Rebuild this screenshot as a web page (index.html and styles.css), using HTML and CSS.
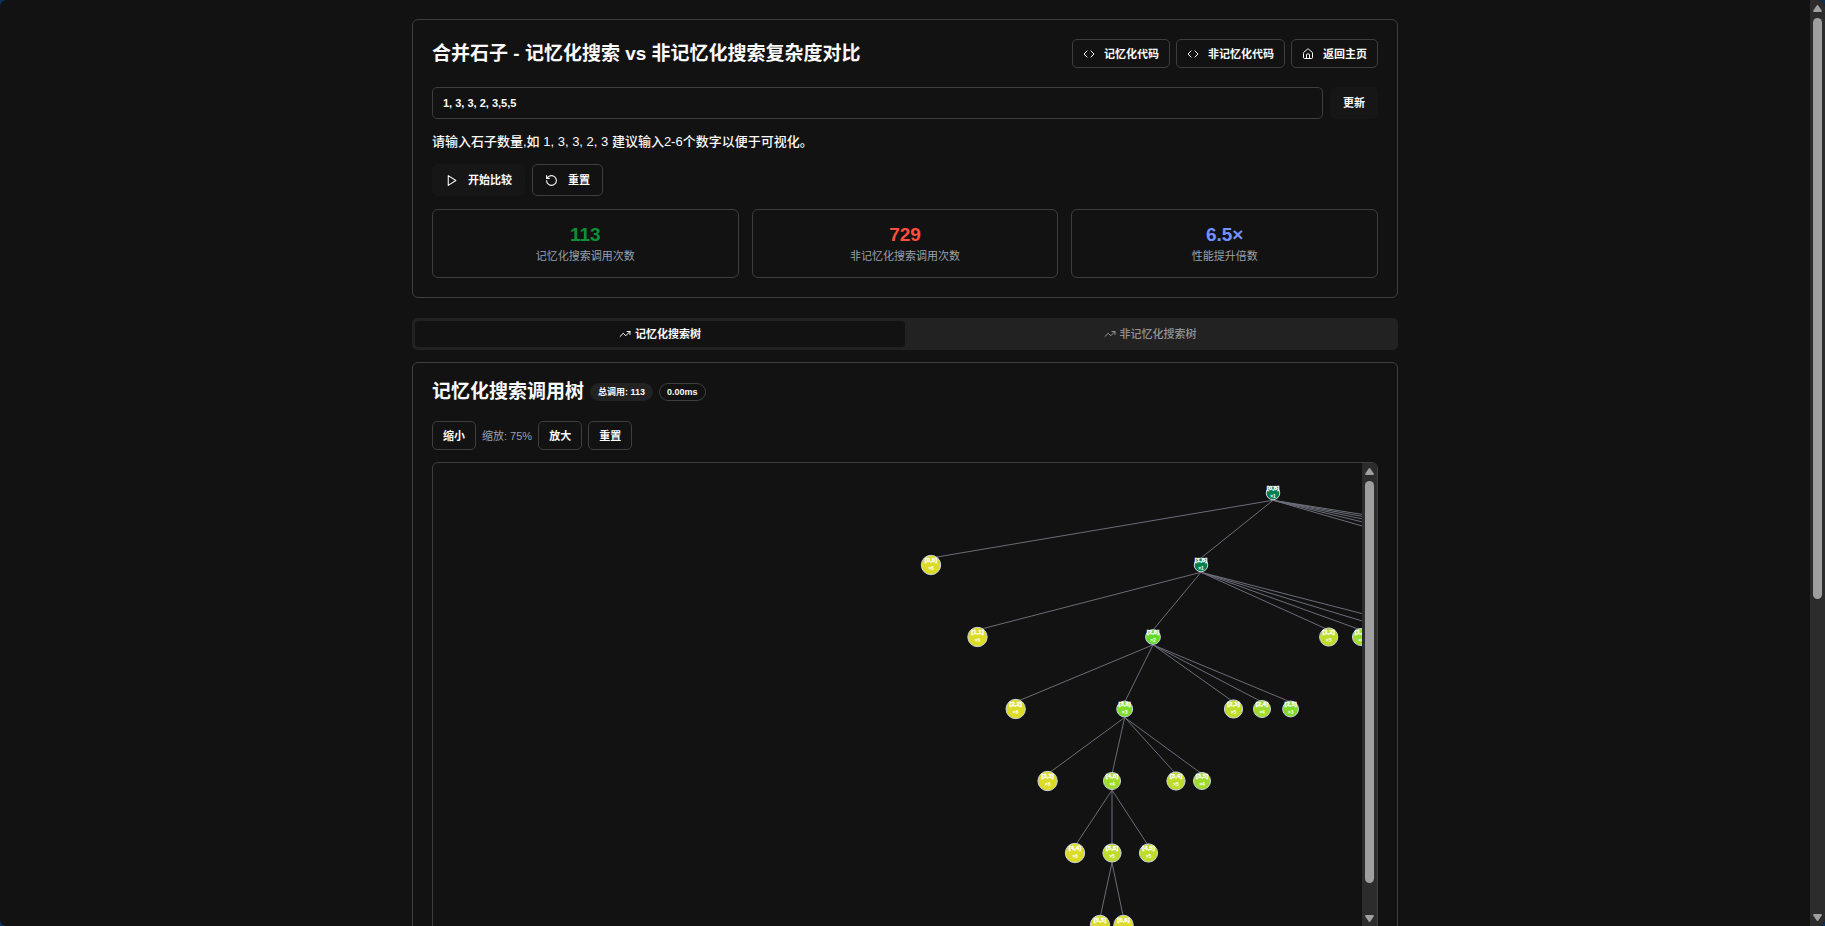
FILE: index.html
```html
<!DOCTYPE html>
<html lang="zh-CN">
<head>
<meta charset="utf-8">
<title>合并石子 - 复杂度对比</title>
<link rel="stylesheet" href="styles.css">
</head>
<body>
<svg class="sprite" aria-hidden="true">
  <symbol id="i-code" viewBox="0 0 24 24"><path d="m16 18 6-6-6-6M8 6l-6 6 6 6"/></symbol>
  <symbol id="i-home" viewBox="0 0 24 24"><path d="M15 21v-8a1 1 0 0 0-1-1h-4a1 1 0 0 0-1 1v8"/><path d="M3 10a2 2 0 0 1 .709-1.528l7-5.999a2 2 0 0 1 2.582 0l7 5.999A2 2 0 0 1 21 10v9a2 2 0 0 1-2 2H5a2 2 0 0 1-2-2z"/></symbol>
  <symbol id="i-play" viewBox="0 0 24 24"><path d="m6 3 14 9-14 9z"/></symbol>
  <symbol id="i-reset" viewBox="0 0 24 24"><path d="M3 12a9 9 0 1 0 9-9 9.75 9.75 0 0 0-6.74 2.74L3 8"/><path d="M3 3v5h5"/></symbol>
  <symbol id="i-trend" viewBox="0 0 24 24"><path d="m22 7-8.5 8.5-5-5L2 17"/><path d="M16 7h6v6"/></symbol>
  <symbol id="i-up" viewBox="0 0 9 7"><path d="M4.5 0Q5 0 5.3.6L8.7 5.4Q9.3 7 8 7H1Q-.3 7 .3 5.4L3.7.6Q4 0 4.5 0Z"/></symbol>
</svg>
<div class="shell">
  <main class="page">
    <div class="container">
      <section class="card controls">
        <header class="head">
          <h1>合并石子 - 记忆化搜索 vs 非记忆化搜索复杂度对比</h1>
          <nav class="actions">
            <button class="btn small" type="button"><svg class="icon"><use href="#i-code"/></svg>记忆化代码</button>
            <button class="btn small" type="button"><svg class="icon"><use href="#i-code"/></svg>非记忆化代码</button>
            <a class="btn small" href="#home"><svg class="icon"><use href="#i-home"/></svg>返回主页</a>
          </nav>
        </header>
        <div class="stack">
          <div class="row">
            <input class="field" type="text" aria-label="石子数量" value="1, 3, 3, 2, 3,5,5">
            <button class="btn primary" type="button">更新</button>
          </div>
          <p class="hint">请输入石子数量,如 1, 3, 3, 2, 3 建议输入2-6个数字以便于可视化。</p>
          <div class="row">
            <button class="btn primary" type="button"><svg class="icon"><use href="#i-play"/></svg>开始比较</button>
            <button class="btn" type="button"><svg class="icon"><use href="#i-reset"/></svg>重置</button>
          </div>
          <div class="stats">
            <div class="stat"><strong class="green">113</strong><span>记忆化搜索调用次数</span></div>
            <div class="stat"><strong class="red">729</strong><span>非记忆化搜索调用次数</span></div>
            <div class="stat"><strong class="blue">6.5×</strong><span>性能提升倍数</span></div>
          </div>
        </div>
      </section>

      <div class="tabs" role="tablist">
        <button class="tab active" type="button" role="tab" aria-selected="true"><svg class="icon"><use href="#i-trend"/></svg>记忆化搜索树</button>
        <button class="tab" type="button" role="tab" aria-selected="false"><svg class="icon"><use href="#i-trend"/></svg>非记忆化搜索树</button>
      </div>

      <section class="card tree-card">
        <div class="tree-head">
          <h2>记忆化搜索调用树</h2>
          <span class="badge filled">总调用: 113</span>
          <span class="badge">0.00ms</span>
        </div>
        <div class="row tight">
          <button class="btn small" type="button">缩小</button>
          <span class="zoom">缩放: 75%</span>
          <button class="btn small" type="button">放大</button>
          <button class="btn small" type="button">重置</button>
        </div>
        <div class="viewport">
          <svg class="tree" id="tree" role="img" aria-label="记忆化搜索调用树"></svg>
          <div class="scrollbar" aria-hidden="true">
            <svg class="arrow"><use href="#i-up"/></svg>
            <div class="track"><div class="thumb inner"></div></div>
            <svg class="arrow down"><use href="#i-up"/></svg>
          </div>
        </div>
      </section>
    </div>
  </main>
  <div class="scrollbar" aria-hidden="true">
    <svg class="arrow"><use href="#i-up"/></svg>
    <div class="track"><div class="thumb outer"></div></div>
    <svg class="arrow down"><use href="#i-up"/></svg>
  </div>
</div>
<script src="app.js"></script>
</body>
</html>
```
FILE: styles.css
```css
* { box-sizing: border-box; }

html { background: #0b2f55; }

body {
  margin: 0;
  color: #fafafa;
  font-family: "Liberation Sans", "Noto Sans CJK SC", sans-serif;
  font-size: 11px;
  line-height: 16px;
}

h1, h2, p { margin: 0; }

button, input { font: inherit; color: inherit; }

.sprite { display: none; }

.shell {
  display: flex;
  height: 100vh;
  overflow: hidden;
  background: #121212;
  border-radius: 7px;
}

.page { flex: 1; min-width: 0; padding: 19px; }

.container { max-width: 986px; margin: 0 auto; }

.card {
  border: 1px solid #3e3e3e;
  border-radius: 6px;
  padding: 19px;
}

.head {
  display: flex;
  align-items: center;
  justify-content: space-between;
  margin-bottom: 19px;
}

h1, h2 { font-size: 19px; line-height: 19px; font-weight: 700; }

.actions { display: flex; gap: 6px; }

.stack { display: flex; flex-direction: column; gap: 13px; }

.row { display: flex; align-items: center; gap: 7px; }

.row.tight { gap: 6px; }

.btn {
  display: inline-flex;
  align-items: center;
  justify-content: center;
  gap: 10px;
  height: 32px;
  padding: 0 12px;
  border: 1px solid #3e3e3e;
  border-radius: 5px;
  background: transparent;
  font-weight: 700;
  text-decoration: none;
  color: inherit;
  white-space: nowrap;
}

.btn.small { height: 29px; padding: 0 10px; gap: 9px; }

.btn.primary { background: #161616; border-color: #161616; }

.icon {
  width: 13px;
  height: 13px;
  fill: none;
  stroke: currentColor;
  stroke-width: 2;
  stroke-linecap: round;
  stroke-linejoin: round;
}

.small .icon, .tab .icon { width: 12px; height: 12px; }

.field {
  flex: 1;
  min-width: 0;
  height: 32px;
  padding: 0 10px;
  border: 1px solid #3e3e3e;
  border-radius: 5px;
  background: transparent;
  font-weight: 700;
}

.hint { font-size: 13px; line-height: 19px; font-weight: 500; }

.stats {
  display: grid;
  grid-template-columns: repeat(3, 1fr);
  gap: 13px;
}

.stat {
  display: flex;
  flex-direction: column;
  align-items: center;
  padding: 12px 13px 13px;
  border: 1px solid #3e3e3e;
  border-radius: 6px;
}

.stat strong { font-size: 19px; line-height: 26px; }

.stat span, .zoom { color: #99a1af; }

.green { color: #0d9136; }
.red { color: #ff4f3c; }
.blue { color: #7093ff; }

.tabs {
  display: grid;
  grid-template-columns: 1fr 1fr;
  height: 32px;
  margin: 20px 0 12px;
  padding: 3px;
  border-radius: 5px;
  background: #222;
}

.tab {
  display: flex;
  align-items: center;
  justify-content: center;
  gap: 4px;
  border: 0;
  border-radius: 4px;
  background: transparent;
  color: #949494;
  font-weight: 500;
}

.tab.active { background: #121212; color: #fafafa; font-weight: 700; }

.tree-head {
  display: flex;
  align-items: center;
  gap: 6px;
  height: 19px;
  margin-bottom: 20px;
}

.badge {
  height: 18px;
  padding: 0 7px;
  border: 1px solid #3e3e3e;
  border-radius: 9px;
  font-size: 9px;
  line-height: 16px;
  font-weight: 700;
}

.badge.filled { background: #222; border-color: #222; }

.viewport {
  display: flex;
  height: 481px;
  margin-top: 12px;
  padding-bottom: 15px;
  border: 1px solid #3e3e3e;
  border-radius: 6px;
  overflow: hidden;
}

.tree { flex: 1; min-width: 0; height: 100%; }

.edge { stroke: #6b6e7a; stroke-width: 1; }

.node circle { stroke: #cbd5e1; stroke-width: 1; }

.node text {
  fill: #fff;
  stroke: #fff;
  stroke-width: 0.3;
  font-size: 6px;
  font-weight: 700;
  text-anchor: middle;
}

.node .depth { font-size: 5px; stroke: none; }

.scrollbar {
  display: flex;
  flex-direction: column;
  align-items: center;
  width: 15px;
  padding: 5px 0;
  background: #2c2c2c;
}

.arrow { width: 9px; height: 7px; fill: #9f9f9f; }

.arrow.down { transform: rotate(180deg); }

.track { flex: 1; width: 9px; padding: 6px 0; }

.thumb { border-radius: 5px; background: #9f9f9f; }

.thumb.inner { height: 402px; }

.thumb.outer { height: 581px; }
```
FILE: app.js
```js
const NS = 'http://www.w3.org/2000/svg';
const FILLS = ['', '#067f4f', '#5fdc26', '#80dc26', '#9fdc29', '#bedc29', '#dcdc26'];
const ROW = 72;
const TOP = 30;

// id: [x, row, depth, parent]
const nodes = {
  '[0,6]': [840, 0, 1, null],
  '[0,0]': [498, 1, 6, '[0,6]'],
  '[1,6]': [768, 1, 1, '[0,6]'],
  '[0,1]': [1040, 1, 5, '[0,6]'],
  '[0,2]': [1078, 1, 4, '[0,6]'],
  '[0,3]': [1117, 1, 3, '[0,6]'],
  '[0,4]': [1160, 1, 2, '[0,6]'],
  '[0,5]': [1205, 1, 1, '[0,6]'],
  '[1,1]': [544.5, 2, 6, '[1,6]'],
  '[2,6]': [720, 2, 2, '[1,6]'],
  '[1,2]': [895.7, 2, 5, '[1,6]'],
  '[1,3]': [928, 2, 4, '[1,6]'],
  '[1,4]': [959, 2, 3, '[1,6]'],
  '[1,5]': [993, 2, 2, '[1,6]'],
  '[2,2]': [582.7, 3, 6, '[2,6]'],
  '[3,6]': [691.7, 3, 3, '[2,6]'],
  '[2,3]': [800.5, 3, 5, '[2,6]'],
  '[2,4]': [829, 3, 4, '[2,6]'],
  '[2,5]': [857.6, 3, 3, '[2,6]'],
  '[3,3]': [614.6, 4, 6, '[3,6]'],
  '[4,6]': [679, 4, 4, '[3,6]'],
  '[3,4]': [743, 4, 5, '[3,6]'],
  '[3,5]': [769, 4, 4, '[3,6]'],
  '[4,4]': [642, 5, 6, '[4,6]'],
  '[5,6]': [679, 5, 5, '[4,6]'],
  '[4,5]': [715.5, 5, 5, '[4,6]'],
  '[5,5]': [667, 6, 6, '[5,6]'],
  '[6,6]': [690.5, 6, 6, '[5,6]']
};

const svg = document.getElementById('tree');
const radius = depth => 6.2 + depth * 0.58;

function add(parent, name, attrs, text) {
  const el = document.createElementNS(NS, name);
  for (const key in attrs) el.setAttribute(key, attrs[key]);
  if (text) el.textContent = text;
  parent.appendChild(el);
  return el;
}

for (const [x, row, , parent] of Object.values(nodes)) {
  if (!parent) continue;
  const [px, prow, pdepth] = nodes[parent];
  add(svg, 'line', {
    class: 'edge',
    x1: px, y1: TOP + prow * ROW + radius(pdepth) + 0.5,
    x2: x, y2: TOP + row * ROW - 7
  });
}

for (const [label, [x, row, depth]] of Object.entries(nodes)) {
  if (x > 940) continue;
  const g = add(svg, 'g', { class: 'node', transform: `translate(${x} ${TOP + row * ROW})` });
  add(g, 'circle', { r: radius(depth), fill: FILLS[depth] });
  add(g, 'text', { y: -3 }, label);
  add(g, 'text', { y: 5, class: 'depth' }, '×' + depth);
}
```
